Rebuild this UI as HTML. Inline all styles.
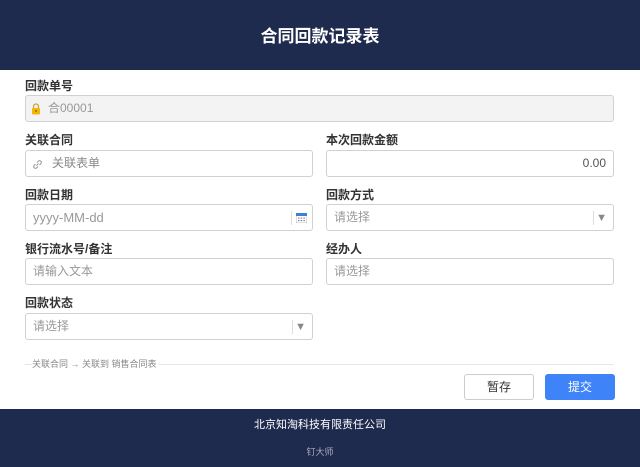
<!DOCTYPE html>
<html><head><meta charset="utf-8"><style>
*{box-sizing:border-box;margin:0;padding:0}
body{width:640px;height:467px;background:#fff;font-family:"Liberation Sans","Noto Sans CJK SC",sans-serif;position:relative;overflow:hidden}
.hdr{position:absolute;left:0;top:0;width:640px;height:70px;background:#1f2b4e;color:#fff;font-size:17px;font-weight:bold;text-align:center;line-height:74px}
.lbl{position:absolute;font-size:12px;font-weight:bold;color:#333}
.in{position:absolute;height:27px;border:1px solid #cfd1d5;border-radius:3px;font-size:12px;color:#999;line-height:25px;padding-left:7px}
.ftr{position:absolute;left:0;top:409px;width:640px;height:58px;background:#1f2b4e;text-align:center}
.btn{position:absolute;top:374px;height:26px;width:70px;border-radius:3px;font-size:12px;text-align:center;line-height:24px}
.sep{position:absolute;top:6px;width:1px;height:14px;background:#ddd}
.arr{position:absolute;right:6px;top:1px;font-size:11px;color:#888}
</style></head><body>
<div class="hdr">合同回款记录表</div>
<div class="lbl" style="left:25px;top:77px">回款单号</div>
<div class="in" style="left:25px;top:95px;width:589px;background:#f3f3f3;padding-left:22px">合00001
<svg style="position:absolute;left:5px;top:7px" width="10" height="12" viewBox="0 0 10 12"><path d="M2.5 5V3.5a2.5 2.5 0 015 0V5" fill="none" stroke="#c8a040" stroke-width="1.2"/><rect x="1" y="5" width="8" height="6.5" rx="1" fill="#f2b705"/><rect x="4.5" y="7" width="1" height="2" fill="#5a4a10"/></svg></div>
<div class="lbl" style="left:25px;top:131px">关联合同</div>
<div class="in" style="left:25px;top:150px;width:288px;padding-left:26px;color:#888">关联表单
<svg style="position:absolute;left:6px;top:8px" width="11" height="11" viewBox="0 0 11 11"><path d="M4.5 6.5l2-2M3.5 5l-1.5 1.5a1.8 1.8 0 002.5 2.5L6 7.5M7.5 6L9 4.5A1.8 1.8 0 006.5 2L5 3.5" fill="none" stroke="#999" stroke-width="1"/></svg></div>
<div class="lbl" style="left:326px;top:131px">本次回款金额</div>
<div class="in" style="left:326px;top:150px;width:288px;text-align:right;padding-right:7px;color:#555">0.00</div>
<div class="lbl" style="left:25px;top:186px">回款日期</div>
<div class="in" style="left:25px;top:204px;width:288px;font-size:13px">yyyy-MM-dd<div class="sep" style="right:20px"></div>
<svg style="position:absolute;right:5px;top:8px" width="11" height="10" viewBox="0 0 11 10"><rect x="0" y="0" width="11" height="10" rx="1" fill="#fff" stroke="#999" stroke-width=".6"/><rect x="0" y="0" width="11" height="3" fill="#3b7fd6"/><g fill="#888"><rect x="2" y="4.5" width="1.5" height="1.2"/><rect x="4.7" y="4.5" width="1.5" height="1.2"/><rect x="7.4" y="4.5" width="1.5" height="1.2"/><rect x="2" y="7" width="1.5" height="1.2"/><rect x="4.7" y="7" width="1.5" height="1.2"/><rect x="7.4" y="7" width="1.5" height="1.2"/></g></svg></div>
<div class="lbl" style="left:326px;top:186px">回款方式</div>
<div class="in" style="left:326px;top:204px;width:288px">请选择<div class="sep" style="right:19px"></div><span class="arr">▼</span></div>
<div class="lbl" style="left:25px;top:240px">银行流水号/备注</div>
<div class="in" style="left:25px;top:258px;width:288px">请输入文本</div>
<div class="lbl" style="left:326px;top:240px">经办人</div>
<div class="in" style="left:326px;top:258px;width:288px">请选择</div>
<div class="lbl" style="left:25px;top:294px">回款状态</div>
<div class="in" style="left:25px;top:313px;width:288px">请选择<div class="sep" style="right:19px"></div><span class="arr">▼</span></div>
<div style="position:absolute;left:25px;top:364px;width:589px;height:1px;background:#e6e6e6"></div>
<div style="position:absolute;left:32px;top:357px;font-size:9px;color:#888;background:#fff;padding-right:2px">关联合同 → 关联到 销售合同表</div>
<div class="btn" style="left:464px;border:1px solid #ccc;color:#333;background:#fff">暂存</div>
<div class="btn" style="left:545px;background:#3f83f8;color:#fff;border:1px solid #3f83f8">提交</div>
<div class="ftr"><div style="color:#fff;font-size:11px;margin-top:7px">北京知淘科技有限责任公司</div><div style="color:#aab;font-size:9px;margin-top:13px">钉大师</div></div>
</body></html>
